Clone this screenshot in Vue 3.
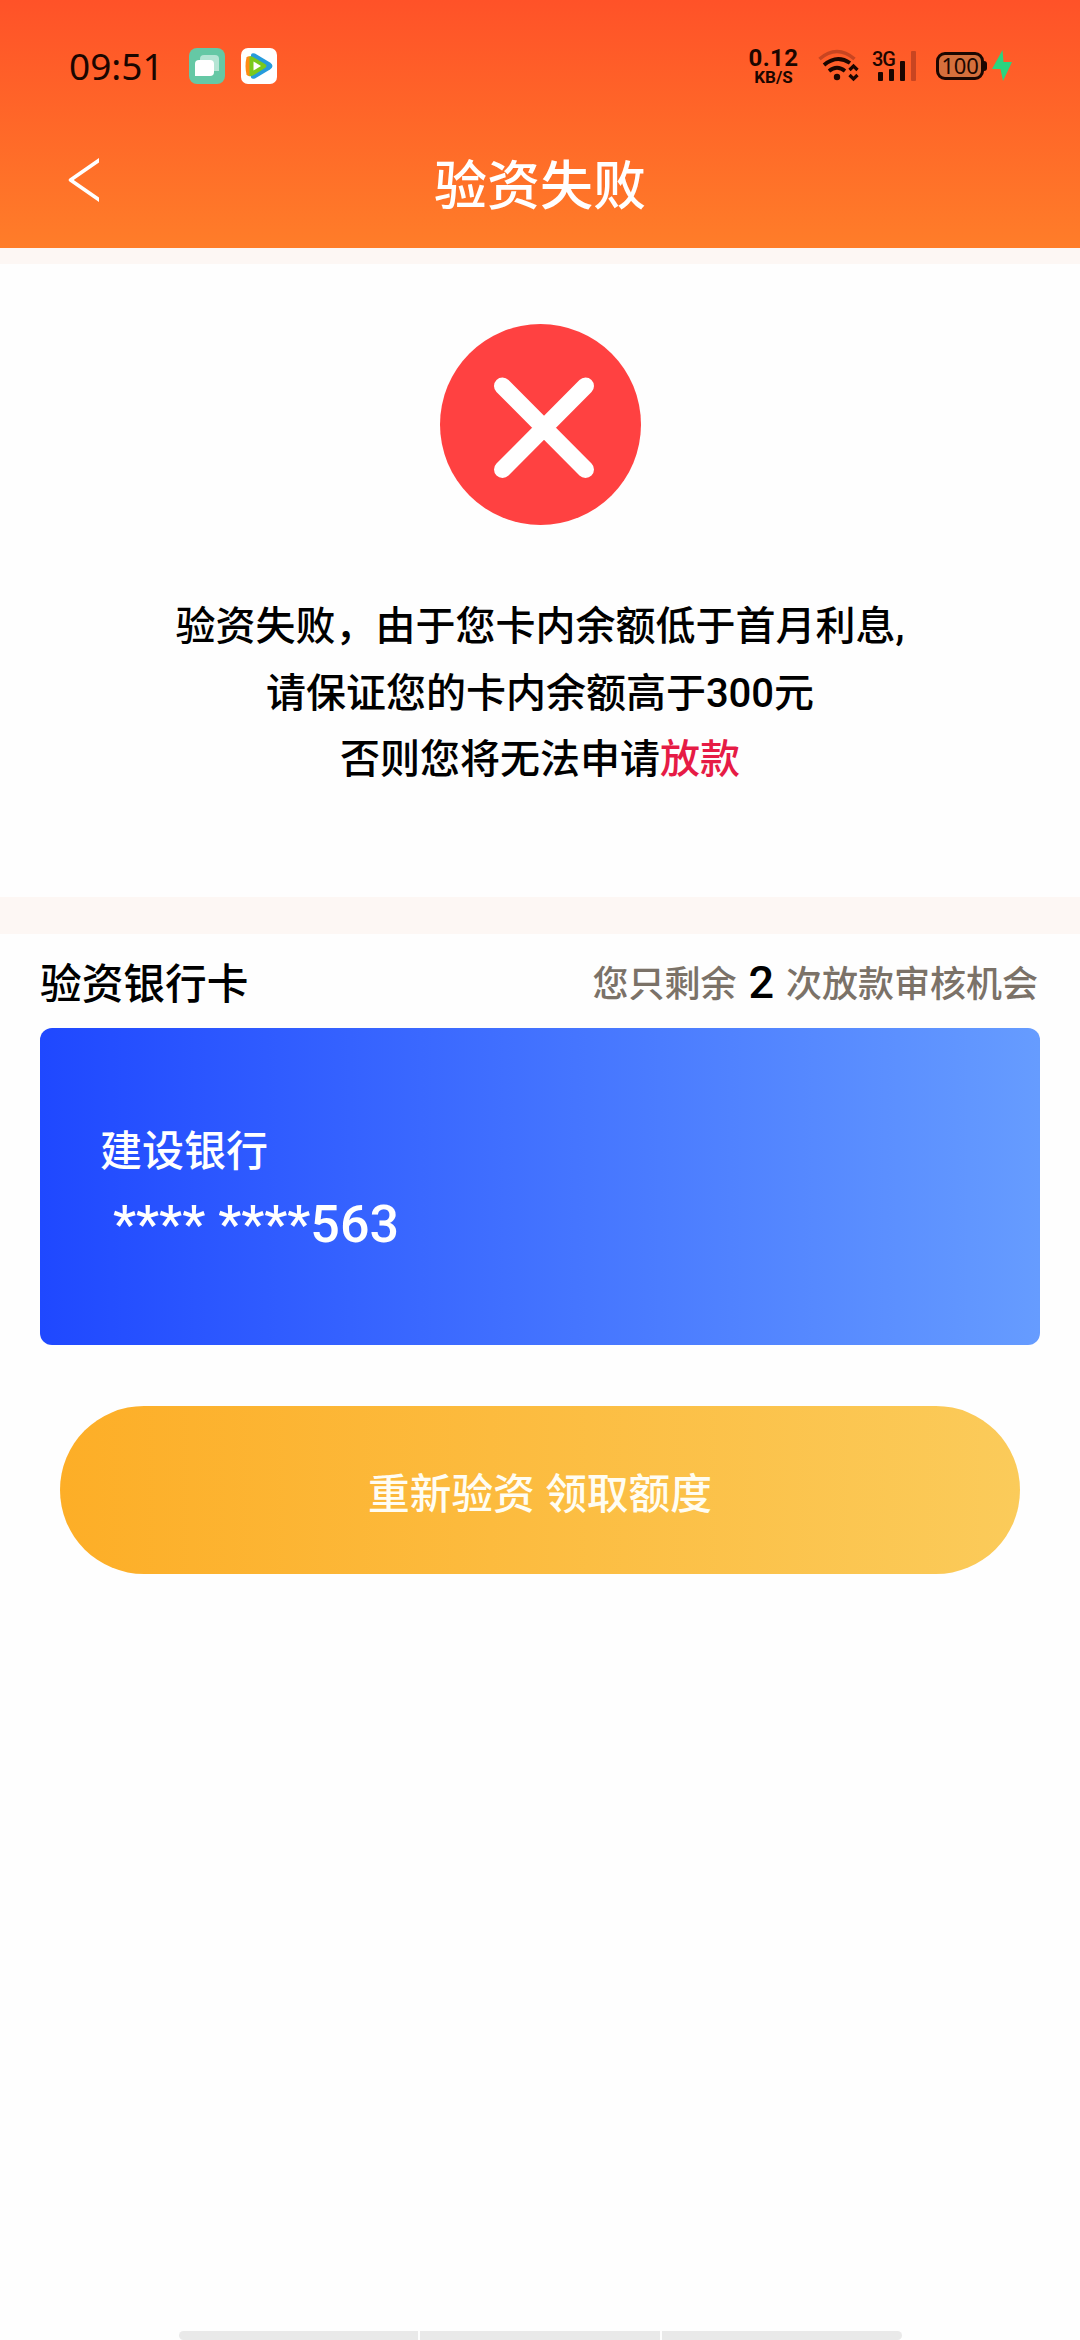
<script setup>
const messageLines = [
  { text: '验资失败，由于您卡内余额低于首月利息,' },
  { text: '请保证您的卡内余额高于300元' },
  { text: '否则您将无法申请', accent: '放款' }
]
const remaining = 2
const bank = '建设银行'
const cardNumber = '**** ****563'
</script>

<template>
  <div class="page">
    <header class="header">
      <div class="status">
        <span class="time">09:51</span>
        <svg class="app-icon chat" viewBox="0 0 36 36">
          <rect width="36" height="36" rx="8" fill="#65c8a5" />
          <path d="M15 7h11q4 0 4 4v12H15q-4 0-4-4v-8q0-4 4-4z" fill="#b5e5d4" />
          <path d="M10 12h11q4 0 4 4v8q0 4-4 4H6V16q0-4 4-4z" fill="#fff" />
        </svg>
        <svg class="app-icon video" viewBox="0 0 36 36">
          <rect width="36" height="36" rx="7" fill="#fff" />
          <path d="M10 6.5Q11 4.500 14 5.500L29 14.500Q34 18 29 21.500L14 30.500Q11 31.500 10 29.500z" fill="#269bdc" />
          <path d="M5.500 9.500Q7 7.500 10 8.500V28Q7 29 5.500 26.500Q3.500 18 5.500 9.500z" fill="#ff8b13" />
          <path d="M8.500 8.500Q10 8 12 9L24 16Q27 18 24 20L12 27.500Q10 28.500 8.500 28z" fill="#79c91d" />
          <path d="M12.500 13.500L20 18L12.500 22.500z" fill="#fff" />
        </svg>
        <span class="speed"><b>0.12</b><small>KB/S</small></span>
        <svg class="wifi" viewBox="0 0 42 34" fill="none">
          <path d="M1.500 10Q19 -5 36.500 10" stroke="#c84521" stroke-width="3.600" />
          <path d="M6 16Q19 5 32 14" stroke="#1b0600" stroke-width="3.800" />
          <path d="M11 22Q19 15.500 27 22" stroke="#1b0600" stroke-width="3.800" />
          <circle cx="19" cy="28" r="3.200" fill="#1b0600" />
          <path d="M31.500 21L35.500 17L39.500 21M31.500 26L35.500 30L39.500 26" stroke="#1b0600" stroke-width="3.200" />
        </svg>
        <span class="signal">
          <svg viewBox="0 0 46 32">
            <g fill="#1b0600">
              <rect x="6" y="22" width="5" height="9" rx="1" />
              <rect x="17" y="19" width="5" height="12" rx="1" />
              <rect x="28" y="11" width="5" height="20" rx="1" />
            </g>
            <rect x="39" y="1" width="5" height="30" rx="1" fill="#c84521" />
          </svg>
          <span class="network">3G</span>
        </span>
        <span class="battery">100</span>
        <svg class="bolt" viewBox="0 0 20 32"><path d="M10.500 0L0 19H8.500L11 31L20 12H11.500z" fill="#2bd47f" /></svg>
      </div>
      <div class="navbar">
        <svg class="back" viewBox="0 0 31 44" fill="none"><path d="M32 1.500L2.500 22L32 42.500" stroke="#fff" stroke-width="3.600" stroke-linejoin="round" /></svg>
        <h1>验资失败</h1>
        <span class="nav-end"></span>
      </div>
    </header>

    <section class="result">
      <svg class="fail" viewBox="0 0 201 201">
        <circle cx="100.500" cy="100.500" r="100.500" fill="#ff4141" />
        <path d="M62.500 62L145.500 145.500M145.500 62L62.500 145.500" stroke="#fff" stroke-width="17" stroke-linecap="round" />
      </svg>
      <p v-for="line in messageLines" :key="line.text">{{ line.text }}<em v-if="line.accent">{{ line.accent }}</em></p>
    </section>

    <section class="account">
      <div class="account-head">
        <h2>验资银行卡</h2>
        <div class="chances">您只剩余<strong>{{ remaining }}</strong>次放款审核机会</div>
      </div>
      <div class="card">
        <div class="bank">{{ bank }}</div>
        <div class="number">{{ cardNumber }}</div>
      </div>
      <button class="retry">重新验资 领取额度</button>
    </section>

    <div class="dock"><i></i><i></i><i></i></div>
  </div>
</template>

<style>
body { background: #fefefe; }
</style>

<style scoped>
.page {
  box-sizing: border-box;
  width: 1080px;
  height: 2340px;
  overflow: hidden;
  display: flex;
  flex-direction: column;
  background: #fefefe;
  color: #000;
  font-family: Roboto, "Noto Sans CJK SC", sans-serif;
  font-weight: 500;
}
svg { display: block; flex: none; }
h1, h2, p { margin: 0; font-weight: 500; }
.header { height: 248px; flex: none; background: linear-gradient(#ff5228, #ff7d29); color: #fff; }
.status { height: 132px; display: flex; align-items: center; color: #1b0600; }
.time { width: 120px; margin-left: 69px; font: 400 37px/40px "Noto Sans", sans-serif; white-space: nowrap; }
.app-icon { width: 36px; height: 36px; }
.video { margin-left: 16px; }
.speed { width: 49px; margin-left: 472px; display: flex; flex-direction: column; align-items: center; }
.speed b { font-size: 24px; font-weight: 700; line-height: 22px; letter-spacing: .4px; }
.speed small { font-size: 17px; font-weight: 700; line-height: 17px; }
.wifi { width: 42px; height: 34px; margin: 0 0 0 20px; }
.signal { position: relative; margin-left: 12px; }
.signal svg { width: 46px; height: 32px; }
.network { position: absolute; left: 0; top: -1px; font-size: 20px; line-height: 20px; letter-spacing: -1px; }
.battery {
  position: relative;
  box-sizing: border-box;
  width: 48px;
  height: 28px;
  margin-left: 18px;
  border: 3px solid #1b0600;
  border-radius: 9px;
  background: #d56f3c;
  font: 400 22px/21px "Noto Sans", sans-serif;
  letter-spacing: -.3px;
  text-align: center;
}
.battery::after { content: ""; position: absolute; right: -6px; top: 6px; width: 3px; height: 10px; border-radius: 0 3px 3px 0; background: #1b0600; }
.bolt { width: 20px; height: 32px; margin-left: 8px; }
.navbar { height: 104px; display: flex; align-items: center; padding: 0 68px; }
.back { width: 31px; height: 44px; margin-bottom: 8px; }
.nav-end { width: 31px; }
h1 { flex: 1; padding-top: 5px; text-align: center; font-size: 53px; line-height: 60px; }
.result {
  box-sizing: border-box;
  height: 686px;
  flex: none;
  display: flex;
  flex-direction: column;
  align-items: center;
  border-top: 16px solid #fdf7f4;
  border-bottom: 37px solid #fdf7f4;
  padding-top: 60px;
}
.fail { width: 201px; height: 201px; margin-bottom: 69px; }
.result p { font-size: 40px; line-height: 66.6px; white-space: nowrap; }
.result em { font-style: normal; color: #e61b45; }
.account { padding: 0 40px; display: flex; flex-direction: column; }
.account-head { height: 94px; display: flex; justify-content: space-between; align-items: center; box-sizing: border-box; padding-top: 8px; }
h2 { font-size: 41.700px; line-height: 60px; }
.chances { display: flex; align-items: center; font-size: 36px; line-height: 60px; color: #7b7268; padding: 0 2px 1px 0; }
.chances strong { margin: 0 12px 4px; font-size: 45px; font-weight: 500; color: #000; }
.card {
  box-sizing: border-box;
  height: 317px;
  padding: 89px 60px 0;
  border-radius: 12px;
  background: linear-gradient(90deg, #1f48ff, #669cff);
  color: #fff;
}
.bank { font-size: 42px; line-height: 70px; }
.number { margin-left: 13px; font-size: 52px; line-height: 76px; }
.retry {
  width: 960px;
  height: 168px;
  margin: 61px auto 0;
  padding: 2px 0 0;
  border: 0;
  border-radius: 84px;
  background: linear-gradient(90deg, #fdae27, #fbcb5a);
  color: #fffdf3;
  font: inherit;
  font-size: 41.700px;
}
.dock { width: 723px; height: 9px; margin: auto auto 0; display: flex; gap: 2px; border-radius: 5px; overflow: hidden; }
.dock i { flex: 1; background: #e9e9e9; }
</style>
